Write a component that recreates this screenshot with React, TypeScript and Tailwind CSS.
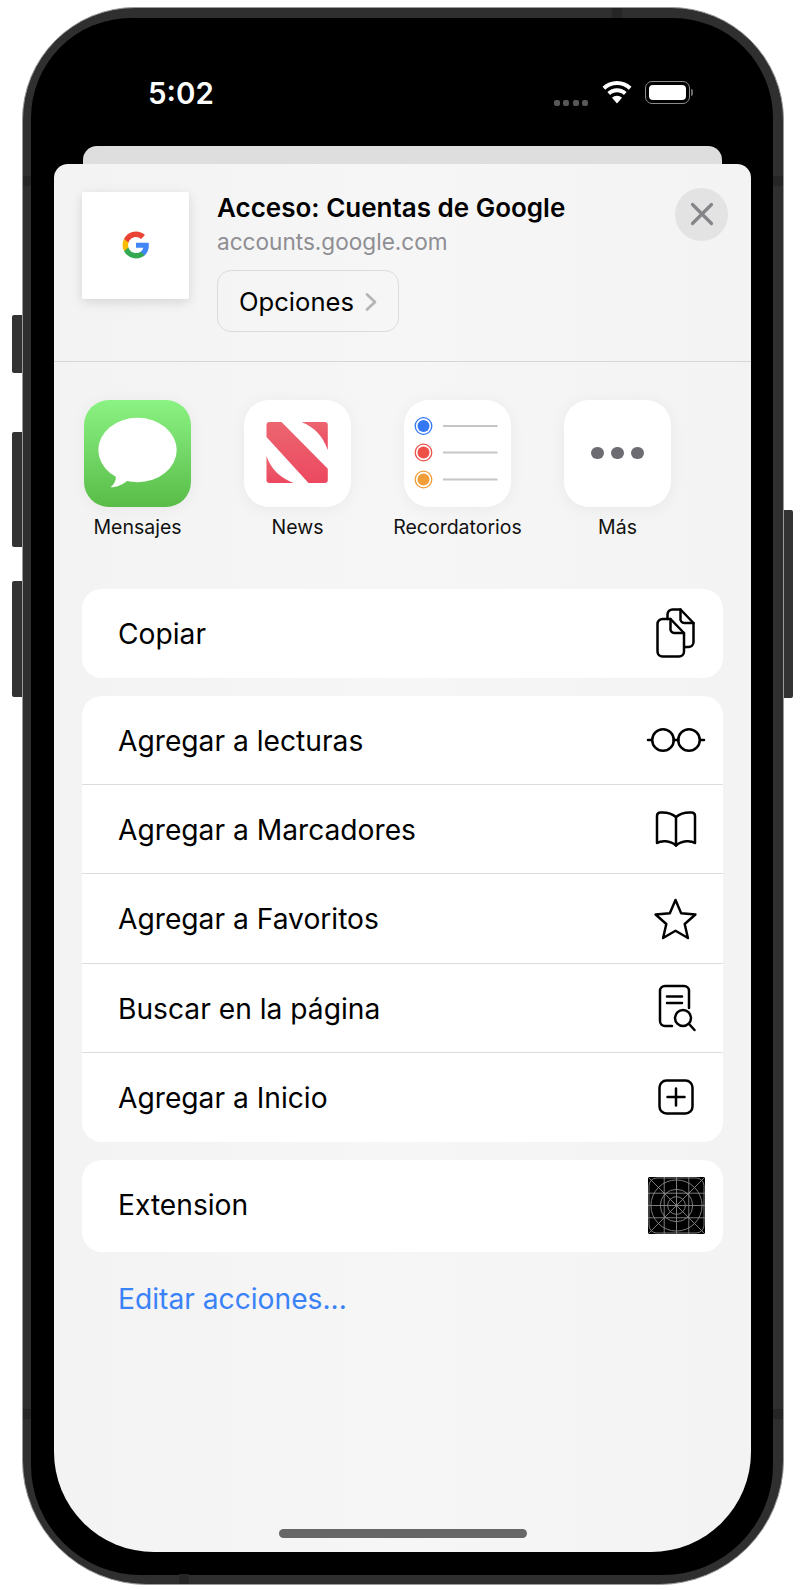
import React from "react";

const font = { fontFamily: "Inter, 'Liberation Sans', sans-serif" };

function GoogleG() {
  return (
    <svg width="28" height="28" viewBox="0 0 48 48">
      <path fill="#4285F4" d="M46 24.5c0-1.6-.1-3.1-.4-4.5H24v8.7h12.4c-.5 2.9-2.1 5.300-4.600 7v5.800h7.400C43.500 37.500 46 31.600 46 24.500z" />
      <path fill="#34A853" d="M24 47c6.200 0 11.400-2 15.200-5.500l-7.400-5.800c-2 1.400-4.700 2.200-7.800 2.200-6 0-11.100-4-12.900-9.500H3.500v5.900C7.300 41.900 15 47 24 47z" />
      <path fill="#FBBC05" d="M11.100 28.400c-.5-1.400-.7-2.900-.7-4.400s.3-3 .7-4.400v-5.900H3.500C2 16.700 1 20.200 1 24s1 7.300 2.500 10.300l7.600-5.900z" />
      <path fill="#EA4335" d="M24 10.100c3.400 0 6.400 1.200 8.800 3.400l6.600-6.600C35.400 3.200 30.200 1 24 1 15 1 7.300 6.100 3.500 13.700l7.600 5.900C12.900 14.100 18 10.100 24 10.100z" />
    </svg>
  );
}

function Messages() {
  return (
    <div className="w-[107px] h-[107px] rounded-[25px] bg-gradient-to-b from-[#8bf383] to-[#59bc48] shadow-[0_2px_16px_rgba(0,0,0,0.05)]">
      <svg width="107" height="107" viewBox="0 0 107 107">
        <ellipse cx="53.500" cy="50" rx="39.200" ry="32.300" fill="#fff" />
        <path d="M32 76c0 5-2 8.500-5.500 11.300 6 .2 12.500-2.800 18-7.300z" fill="#fff" />
      </svg>
    </div>
  );
}

function News() {
  return (
    <div className="w-[107px] h-[107px] rounded-[25px] bg-white shadow-[0_2px_16px_rgba(0,0,0,0.05)]">
      <svg width="107" height="107" viewBox="0 0 107 107">
        <defs>
          <linearGradient id="newsGrad" x1="0" y1="0" x2="0" y2="1">
            <stop offset="0" stopColor="#ec6670" />
            <stop offset="1" stopColor="#ec4860" />
          </linearGradient>
        </defs>
        <g transform="translate(22.500 22)" fill="url(#newsGrad)">
          <path d="M3 0H15L61.300 46.700V58a3 3 0 0 1-3 3H42L0 15V3a3 3 0 0 1 3-3z" />
          <path d="M35 0H58.300a3 3 0 0 1 3 3V28C56 14 49 6 35 0z" />
          <path d="M0 34V58a3 3 0 0 0 3 3H27C13 55 5 48 0 34z" />
        </g>
      </svg>
    </div>
  );
}

function Reminders() {
  const rows = [
    { y: 26, c: "#3478f6" },
    { y: 52.500, c: "#ee5148" },
    { y: 79.500, c: "#f19d38" },
  ];
  return (
    <div className="w-[107px] h-[107px] rounded-[25px] bg-white shadow-[0_2px_16px_rgba(0,0,0,0.05)]">
      <svg width="107" height="107" viewBox="0 0 107 107">
        {rows.map((r) => (
          <g key={r.y}>
            <circle cx="19.500" cy={r.y} r="8.300" fill="none" stroke={r.c} strokeWidth="1.300" />
            <circle cx="19.500" cy={r.y} r="6" fill={r.c} />
            <line x1="39" x2="93.500" y1={r.y} y2={r.y} stroke="#c6c6c9" strokeWidth="1.800" />
          </g>
        ))}
      </svg>
    </div>
  );
}

function More() {
  return (
    <div className="w-[107px] h-[107px] rounded-[25px] bg-white shadow-[0_2px_16px_rgba(0,0,0,0.05)] flex items-center justify-center gap-[7.500px]">
      <span className="w-[12.500px] h-[12.500px] rounded-full bg-[#6c6c72]" />
      <span className="w-[12.500px] h-[12.500px] rounded-full bg-[#6c6c72]" />
      <span className="w-[12.500px] h-[12.500px] rounded-full bg-[#6c6c72]" />
    </div>
  );
}

const stroke = { fill: "none", stroke: "#000", strokeWidth: 2.500, strokeLinecap: "round" as const, strokeLinejoin: "round" as const };

function CopyIcon() {
  return (
    <svg width="40" height="50" viewBox="0 0 40 50" {...stroke}>
      <path d="M11.500 11V6.500a5 5 0 0 1 5-5h8l13 13.500v19a5 5 0 0 1-5 5h-3.500" />
      <path d="M24.500 1.500V10a4 4 0 0 0 4 5H37.500" />
      <path d="M1.500 16a5 5 0 0 1 5-5h8L28 25v18.500a5 5 0 0 1-5 5H6.500a5 5 0 0 1-5-5z" />
      <path d="M14.500 11v9a4 4 0 0 0 4 5H28" />
    </svg>
  );
}
function Glasses() {
  return (
    <svg width="60" height="26" viewBox="0 0 60 26" {...stroke}>
      <circle cx="17" cy="13" r="10.800" />
      <circle cx="43" cy="13" r="10.800" />
      <path d="M27.500 13h5M6 13H2M54 13h4" />
    </svg>
  );
}
function Book() {
  return (
    <svg width="44" height="38" viewBox="0 0 44 38" {...stroke}>
      <path d="M22 7C18 3.500 12 2 6 2.500 4 2.700 3 4 3 6v27c4-2.500 13-2.800 19 2.500C28 30.200 37 30.500 41 33V6c0-2-1-3.300-3-3.500C32 2 26 3.500 22 7z" />
      <path d="M22 7v28.500" />
    </svg>
  );
}
function Star() {
  return (
    <svg width="43" height="43" viewBox="0 0 44 44" {...stroke}>
      <path d="M22 3l5.800 13.600 14.600 1.300-11 9.700 3.300 14.400L22 34.500 9.300 42l3.300-14.400-11-9.700 14.600-1.300z" />
    </svg>
  );
}
function DocSearch() {
  return (
    <svg width="38" height="48" viewBox="0 0 38 48" {...stroke}>
      <path d="M14 42H7a5 5 0 0 1-5-5V7a5 5 0 0 1 5-5h19a5 5 0 0 1 5 5v17" />
      <path d="M9 12.500h15M9 19h15" />
      <circle cx="25" cy="34" r="8" />
      <path d="M31 40l5.500 6" />
    </svg>
  );
}
function PlusSquare() {
  return (
    <svg width="36" height="36" viewBox="0 0 36 36" {...stroke}>
      <rect x="1.500" y="1.500" width="33" height="33" rx="7" />
      <path d="M18 9.500v17M9.500 18h17" />
    </svg>
  );
}
function Grid() {
  return (
    <svg width="57" height="57" viewBox="0 0 58 58" className="bg-black block" fill="none" stroke="#8a8a8a" strokeWidth="0.900">
      <rect x="1" y="1" width="56" height="56" rx="8" />
      <path d="M0 0L58 58M58 0L0 58M16.500 0V58M29 0V58M41.500 0V58M0 16.500H58M0 29H58M0 41.500H58" />
      <circle cx="29" cy="29" r="9" />
      <circle cx="29" cy="29" r="16.500" />
      <circle cx="29" cy="29" r="26" />
    </svg>
  );
}

function Row({ label, icon, last, iconClass }: { label: string; icon: React.ReactNode; last?: boolean; iconClass: string }) {
  return (
    <div className={`h-[89.250px] flex items-center pl-[36px] ${last ? "" : "border-b border-[#dcdcdf]"}`}>
      <span className="text-[28.200px] text-black leading-none mt-[2px]">{label}</span>
      <span className={`ml-auto flex justify-center ${iconClass}`}>{icon}</span>
    </div>
  );
}

function AppCell({ icon, label }: { icon: React.ReactNode; label: string }) {
  return (
    <div className="w-[160px] flex flex-col items-center">
      {icon}
      <span className="mt-[8px] text-[19.500px] leading-[24px] text-[#111] whitespace-nowrap">{label}</span>
    </div>
  );
}

export default function App() {
  return (
    <div className="w-[804px] h-[1590px] bg-white overflow-hidden pt-[7px] pl-[22px]" style={font}>
      <div className="relative w-[762px] h-[1578px] rounded-t-[113px] rounded-b-[125px] bg-[#2f2f2f] border border-[#9a9a9a] pt-[10px] px-[8px] pb-[9px]">
        {/* side buttons */}
        <div className="absolute left-[-11px] top-[307px] w-[10px] h-[58px] rounded-l-[2px] bg-[#333]" />
        <div className="absolute left-[-11px] top-[424px] w-[10px] h-[115px] rounded-l-[2px] bg-[#333]" />
        <div className="absolute left-[-11px] top-[573px] w-[10px] h-[116px] rounded-l-[2px] bg-[#333]" />
        <div className="absolute right-[-10px] top-[502px] w-[9px] h-[188px] rounded-r-[2px] bg-[#333]" />
        {/* antenna bands */}
        <div className="absolute left-[589px] top-0 w-[10px] h-[10px] bg-[#262626]" />
        <div className="absolute left-[156px] bottom-0 w-[10px] h-[10px] bg-[#262626]" />
        <div className="absolute left-0 top-[168px] w-[8px] h-[10px] bg-[#262626]" />
        <div className="absolute right-0 top-[168px] w-[10px] h-[10px] bg-[#262626]" />
        <div className="absolute left-0 bottom-[165px] w-[8px] h-[10px] bg-[#262626]" />
        <div className="absolute right-0 bottom-[165px] w-[10px] h-[10px] bg-[#262626]" />

        <div className="w-[742px] h-[1557px] rounded-t-[100px] rounded-b-[110px] bg-black pl-[23px] pr-[22px] pb-[23px] flex flex-col">
          {/* status bar */}
          <div className="h-[127.500px] shrink-0 relative flex items-start text-white">
            <span className="ml-[94px] mt-[57px] text-[29.500px] leading-[36px] font-semibold">5:02</span>
            <div className="ml-auto mr-[58px] mt-[63px] flex items-start">
              <div className="mt-[19px] flex gap-[3.500px] mr-[14px]">
                <span className="w-[6px] h-[6px] rounded-[2px] bg-[#585858]" />
                <span className="w-[6px] h-[6px] rounded-[2px] bg-[#585858]" />
                <span className="w-[6px] h-[6px] rounded-[2px] bg-[#585858]" />
                <span className="w-[6px] h-[6px] rounded-[2px] bg-[#585858]" />
              </div>
              <svg width="30" height="23" viewBox="0 0 30 23" className="mr-[13px]" fill="#fff">
                <path d="M15 0C9.400 0 4.300 2.200.5 5.800l2.700 2.900C6.300 5.800 10.400 4 15 4s8.700 1.800 11.800 4.700l2.700-2.900C25.700 2.200 20.600 0 15 0z" />
                <path d="M15 7.300c-3.700 0-7.100 1.400-9.600 3.800l2.700 2.900c1.800-1.700 4.200-2.700 6.900-2.700s5.100 1 6.900 2.700l2.700-2.900C22.100 8.700 18.700 7.300 15 7.300z" />
                <path d="M15 14.700c-1.900 0-3.700.7-5 2l5 5.800 5-5.800c-1.300-1.300-3.100-2-5-2z" />
              </svg>
              <div className="flex items-center">
                <div className="w-[45px] h-[23px] rounded-[7px] border border-[#8c8c8c] p-[3px]">
                  <div className="w-full h-full rounded-[4px] bg-white" />
                </div>
                <div className="ml-[1px] w-[2px] h-[7px] rounded-r-[2px] bg-[#6c6c6c]" />
              </div>
            </div>
          </div>
          {/* back card */}
          <div className="h-[18px] shrink-0 mx-[29px] rounded-t-[14px] bg-[#dedede]" />
          {/* sheet */}
          <div className="flex-1 rounded-t-[14px] rounded-b-[100px] bg-gradient-to-r from-[#f3f3f4] via-[#f6f6f6] to-[#f3f3f4] flex flex-col relative">
            {/* header */}
            <div className="h-[198px] shrink-0 border-b border-[#d6d6d8] flex items-start pl-[28px] pr-[23px] pt-[28px]">
              <div className="w-[107px] h-[107px] shrink-0 bg-white rounded-[2px] shadow-[0_3px_12px_rgba(0,0,0,0.13)] flex items-center justify-center">
                <GoogleG />
              </div>
              <div className="ml-[28px] flex flex-col items-start">
                <span className="mt-[-1px] text-[26px] leading-[34px] font-semibold text-black whitespace-nowrap">Acceso: Cuentas de Google</span>
                <span className="mt-[1px] text-[22.600px] leading-[32px] text-[#8e8e93]">accounts.google.com</span>
                <div className="mt-[12px] w-[182px] h-[62px] rounded-[14px] border-[1.500px] border-[#dcdcde] flex items-center pl-[21px] pt-[2px]">
                  <span className="text-[25.600px] leading-none text-black">Opciones</span>
                  <svg width="14" height="20" viewBox="0 0 14 20" className="ml-[10px]" fill="none" stroke="#b4b4b7" strokeWidth="2.700" strokeLinecap="round" strokeLinejoin="round">
                    <path d="M3 2.500l8 7.500-8 7.500" />
                  </svg>
                </div>
              </div>
              <div className="ml-auto mt-[-4px] w-[53px] h-[53px] rounded-full bg-[#e3e3e4] flex items-center justify-center">
                <svg width="24" height="24" viewBox="0 0 24 24" fill="none" stroke="#858589" strokeWidth="3.200" strokeLinecap="round">
                  <path d="M2.500 2.500l19 19M21.500 2.500l-19 19" />
                </svg>
              </div>
            </div>
            {/* apps */}
            <div className="flex pl-[3.500px] pt-[38px] shrink-0">
              <AppCell icon={<Messages />} label="Mensajes" />
              <AppCell icon={<News />} label="News" />
              <AppCell icon={<Reminders />} label="Recordatorios" />
              <AppCell icon={<More />} label="Más" />
            </div>
            {/* cards */}
            <div className="mt-[50px] mx-[28px] rounded-[20px] bg-white">
              <Row label="Copiar" icon={<CopyIcon />} last iconClass="mr-[27px]" />
            </div>
            <div className="mt-[18px] mx-[28px] rounded-[20px] bg-white">
              <Row label="Agregar a lecturas" icon={<Glasses />} iconClass="mr-[17px]" />
              <Row label="Agregar a Marcadores" icon={<Book />} iconClass="mr-[25px]" />
              <Row label="Agregar a Favoritos" icon={<Star />} iconClass="mr-[26px]" />
              <Row label="Buscar en la página" icon={<DocSearch />} iconClass="mr-[27px]" />
              <Row label="Agregar a Inicio" icon={<PlusSquare />} last iconClass="mr-[29px]" />
            </div>
            <div className="mt-[18px] mx-[28px] h-[92px] rounded-[20px] bg-white flex items-center pl-[36px] pr-[18px]">
              <span className="text-[28.200px] text-black leading-none mb-[2px]">Extension</span>
              <span className="ml-auto mt-[-2px]"><Grid /></span>
            </div>
            <div className="mt-[29px] ml-[64px] text-[28.200px] leading-[36px] text-[#3a82f7]">Editar acciones...</div>
            {/* home indicator */}
            <div className="absolute bottom-[14px] left-[225px] w-[248px] h-[9px] rounded-full bg-[#666]" />
          </div>
        </div>
      </div>
    </div>
  );
}
